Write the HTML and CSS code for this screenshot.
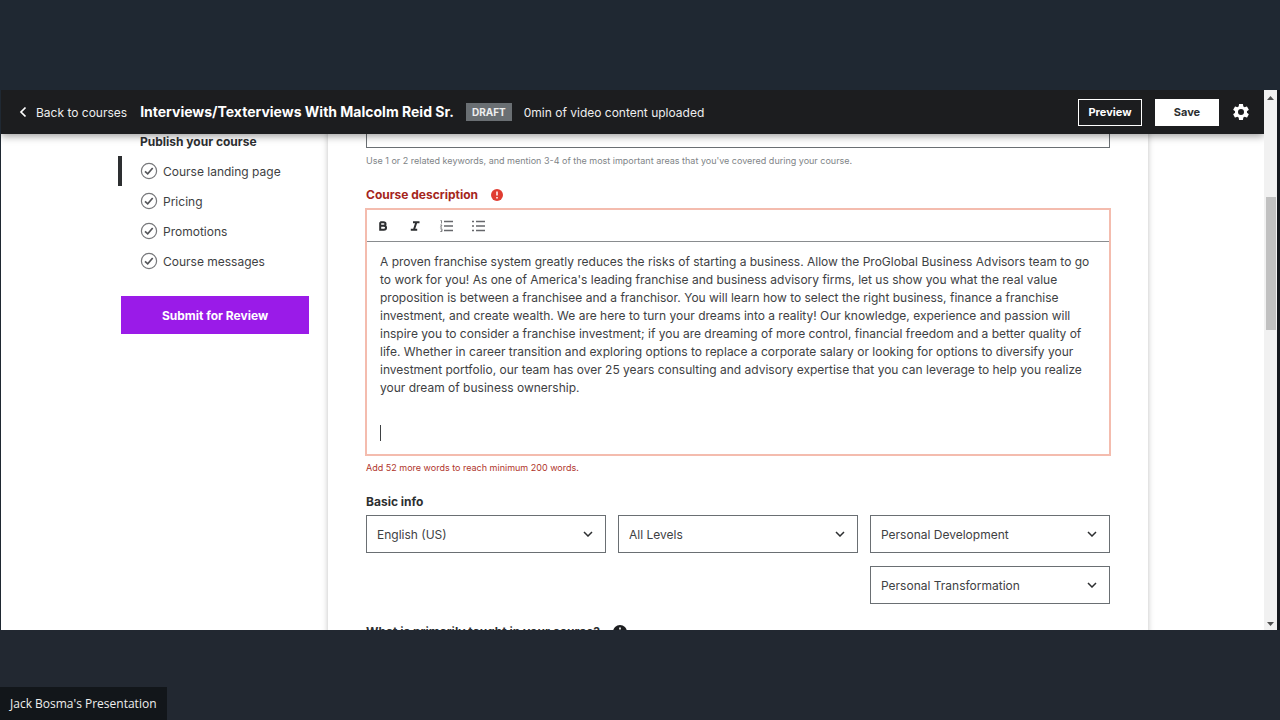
FILE: index.html
```html
<!DOCTYPE html>
<html lang="en">
<head>
<meta charset="utf-8">
<title>Course landing page</title>
<link rel="stylesheet" href="styles.css">
</head>
<body>
<svg class="defs" aria-hidden="true">
  <symbol id="check" viewBox="0 0 18 18"><circle cx="9" cy="9" r="7.6" fill="none" stroke="#77787b" stroke-width="1.2"/><path d="M5 9.3l2.7 2.5 5-5.8" fill="none" stroke="#55565a" stroke-width="1.7"/></symbol>
</svg>
<div class="stage">
  <div class="screen">
    <div class="app">
      <header class="topbar">
        <a class="back" href="#"><svg width="8" height="12" viewBox="0 0 8 12"><path d="M6.5 1.5L2 6l4.500 4.500" fill="none" stroke="#fff" stroke-width="1.700"/></svg>Back to courses</a>
        <h1 class="title">Interviews/Texterviews With Malcolm Reid Sr.</h1>
        <span class="draft">DRAFT</span>
        <span class="uploaded">0min of video content uploaded</span>
        <button class="btn preview" type="button">Preview</button>
        <button class="btn save" type="button">Save</button>
        <button class="gear" type="button" aria-label="Settings"><svg width="20" height="20" viewBox="0 0 24 24"><path fill="#fff" d="M19.140 12.940c.04-.3.060-.61.060-.94 0-.32-.02-.64-.07-.94l2.030-1.580c.18-.14.23-.41.120-.61l-1.920-3.320c-.12-.22-.37-.29-.59-.22l-2.390.96c-.5-.38-1.030-.7-1.620-.94l-.36-2.540c-.04-.24-.24-.41-.48-.41h-3.840c-.24 0-.43.170-.47.410l-.36 2.540c-.59.240-1.130.570-1.620.940l-2.390-.96c-.22-.08-.47 0-.59.220L2.740 8.870c-.12.210-.08.470.120.610l2.030 1.580c-.05.300-.09.630-.09.940s.02.640.070.940l-2.030 1.580c-.18.140-.23.410-.12.610l1.920 3.320c.12.220.370.290.590.220l2.390-.96c.5.380 1.030.7 1.620.940l.36 2.540c.05.240.240.410.480.410h3.840c.24 0 .440-.17.470-.41l.36-2.540c.59-.24 1.130-.56 1.620-.94l2.390.96c.22.080.470 0 .590-.22l1.920-3.320c.12-.22.070-.47-.12-.61l-2.010-1.580zM12 15.600a3.600 3.600 0 1 1 0-7.200 3.600 3.600 0 0 1 0 7.200z"/></svg></button>
      </header>
      <div class="body">
        <nav class="side">
          <h2 class="side-title">Publish your course</h2>
          <a class="item current" href="#"><svg width="18" height="18"><use href="#check"/></svg>Course landing page</a>
          <a class="item" href="#"><svg width="18" height="18"><use href="#check"/></svg>Pricing</a>
          <a class="item" href="#"><svg width="18" height="18"><use href="#check"/></svg>Promotions</a>
          <a class="item" href="#"><svg width="18" height="18"><use href="#check"/></svg>Course messages</a>
          <button class="submit" type="button">Submit for Review</button>
        </nav>
        <main class="card">
          <input class="field" type="text" aria-label="Course subtitle">
          <p class="hint">Use 1 or 2 related keywords, and mention 3-4 of the most important areas that you've covered during your course.</p>
          <div class="label error" id="desc-label">Course description<svg width="12" height="12" viewBox="0 0 12 12"><circle cx="6" cy="6" r="6" fill="#e03c31"/><path d="M6 2.500v4M6 8v1.500" stroke="#fff" stroke-width="1.500"/></svg></div>
          <div class="editor">
            <div class="tools">
              <button class="tool" type="button" aria-label="Bold"><svg width="16" height="16" viewBox="0 0 16 16"><path d="M5.200 4.200h3.300c2.700 0 2.700 3.500 0 3.500H5.200M5.200 7.700h3.600c3 0 3 4.100 0 4.100H5.200V4.200" fill="none" stroke="#2d2f31" stroke-width="2"/></svg></button>
              <button class="tool" type="button" aria-label="Italic"><svg width="16" height="16" viewBox="0 0 16 16"><path d="M6 4.200h6.500M3.800 11.800h6.400M9.400 4.200L6.900 11.800" fill="none" stroke="#2d2f31" stroke-width="2"/></svg></button>
              <button class="tool" type="button" aria-label="Numbered list"><svg width="16" height="16" viewBox="0 0 16 16"><path d="M5 3.500h9M5 8h9M5 12.500h9" stroke="#66676b" stroke-width="1.500"/><path d="M1.500 2.500h1v3M1.300 7h1.700L1.500 9.200H3M1.300 10.800H3v2.700H1.300M2 12.200h1" fill="none" stroke="#77787b" stroke-width=".9"/></svg></button>
              <button class="tool" type="button" aria-label="Bulleted list"><svg width="16" height="16" viewBox="0 0 16 16"><path d="M5 3.500h9M5 8h9M5 12.500h9M1 3.500h2M1 8h2M1 12.500h2" stroke="#66676b" stroke-width="1.500"/></svg></button>
            </div>
            <div class="text" role="textbox" aria-multiline="true" aria-labelledby="desc-label">
              <p>A proven franchise system greatly reduces the risks of starting a business. Allow the ProGlobal Business Advisors team to go<br>to work for you! As one of America's leading franchise and business advisory firms, let us show you what the real value<br>proposition is between a franchisee and a franchisor. You will learn how to select the right business, finance a franchise<br>investment, and create wealth. We are here to turn your dreams into a reality! Our knowledge, experience and passion will<br>inspire you to consider a franchise investment; if you are dreaming of more control, financial freedom and a better quality of<br>life. Whether in career transition and exploring options to replace a corporate salary or looking for options to diversify your<br>investment portfolio, our team has over 25 years consulting and advisory expertise that you can leverage to help you realize<br>your dream of business ownership.</p>
              <div class="caret"></div>
            </div>
          </div>
          <p class="hint warn">Add 52 more words to reach minimum 200 words.</p>
          <h2 class="label">Basic info</h2>
          <div class="selects">
            <select class="select" aria-label="Language"><option>English (US)</option></select>
            <select class="select" aria-label="Level"><option>All Levels</option></select>
            <div class="stack">
              <select class="select" aria-label="Category"><option>Personal Development</option></select>
              <select class="select" aria-label="Subcategory"><option>Personal Transformation</option></select>
            </div>
          </div>
          <h2 class="label taught">What is primarily taught in your course?<svg width="14" height="14" viewBox="0 0 14 14"><circle cx="7" cy="7" r="7" fill="#1c1d1f"/><path d="M7 2.500v2M7 6v5" stroke="#fff" stroke-width="1.600"/></svg></h2>
        </main>
      </div>
    </div>
    <div class="scrollbar" aria-hidden="true">
      <svg width="7" height="4"><path d="M0 4L3.500 0 7 4z" fill="#505050"/></svg>
      <div class="thumb"></div>
      <svg width="7" height="4"><path d="M0 0h7L3.500 4z" fill="#505050"/></svg>
    </div>
  </div>
  <div class="foot"><span class="caption">Jack Bosma's Presentation</span></div>
</div>
</body>
</html>
```
FILE: styles.css
```css
* { box-sizing: border-box; }
body { margin: 0; background: #1f2832; font-family: Inter, "Liberation Sans", sans-serif; font-size: 12px; color: #3e4143; }
h1, h2, p { margin: 0; }
a { color: inherit; text-decoration: none; }
button, select, input { font: inherit; color: inherit; border-radius: 0; margin: 0; }
.defs { position: absolute; width: 0; height: 0; }
.stage { height: 100vh; display: grid; grid-template-rows: 1fr 6fr 1fr; grid-template-columns: minmax(0, 1fr); overflow: hidden; }
.screen { grid-row: 2; min-height: 0; display: flex; background: #fff; border-left: 1px solid #1f2832; border-right: 3px solid #14181d; }
.app { flex: 1; min-width: 0; display: flex; flex-direction: column; overflow: hidden; }
.topbar { position: relative; z-index: 1; flex: none; height: 44px; padding: 0 13px 0 18px; display: flex; align-items: center; background: #1c1d1f; color: #fff; box-shadow: 0 2px 8px rgba(0, 0, 0, .4); white-space: nowrap; }
.back { display: flex; align-items: center; gap: 9px; color: #eee; }
.title { margin-left: 13px; font-size: 14px; line-height: 16px; font-weight: 700; }
.draft { margin: 0 12px; padding: 0 6px; line-height: 18px; background: #6a6f73; font-size: 10px; font-weight: 700; color: #eee; }
.uploaded { color: #eee; }
.btn { width: 64px; height: 27px; padding: 0; border: 1px solid #fff; font-size: 11px; font-weight: 700; }
.preview { margin-left: auto; background: transparent; color: #fff; }
.save { margin: 0 12px 0 13px; background: #fff; color: #2d2f31; }
.gear { width: 20px; height: 20px; padding: 0; border: 0; background: none; }
.gear svg, .tool svg { display: block; }
.body { flex: 1; min-height: 0; display: flex; overflow: hidden; }
.side { flex: none; width: 327px; padding-right: 19px; }
.side-title { padding-left: 139px; font-size: 12px; line-height: 16px; font-weight: 700; color: #2d2f31; }
.item { display: flex; align-items: center; gap: 5px; height: 30px; margin-left: 117px; padding-left: 18px; border-left: 4px solid transparent; }
.current { margin: 6px 0 0 117px; border-left-color: #2d2f31; }
.submit { display: block; width: 188px; height: 38px; margin: 20px 0 0 auto; border: 0; background: #9a1be8; color: #fff; font-size: 12px; font-weight: 700; }
.card { flex: 1; min-width: 0; align-self: flex-start; margin: -24px 116px 0 0; padding: 0 38px; box-shadow: 0 0 6px rgba(0, 0, 0, .25); }
.field { display: block; width: 100%; height: 38px; border: 1px solid #6a6f73; background: #fff; }
.hint { margin-top: 5px; font-size: 9px; line-height: 16px; color: #808487; }
.label { display: flex; align-items: center; gap: 13px; margin: 18px 0 5px; font-size: 12px; line-height: 16px; font-weight: 700; color: #2d2f31; }
.taught { margin-top: 20px; }
.error { color: #a5261c; }
.editor { border: 2px solid #f4bcae; margin: 0 -1px; }
.tools { display: flex; gap: 16px; height: 32px; padding: 0 8px; align-items: center; border-bottom: 1px solid #898c8f; }
.tool { width: 16px; height: 16px; padding: 0; border: 0; background: none; }
.text { height: 212px; padding: 11px 13px; line-height: 18px; white-space: nowrap; }
.caret { width: 1px; height: 16px; margin-top: 28px; background: #3e4143; }
.warn { margin-top: 4px; color: #b0352b; }
.selects { display: grid; grid-template-columns: repeat(3, 1fr); gap: 12px; align-items: start; }
.stack { display: grid; gap: 13px; }
.select { width: 100%; height: 38px; padding: 0 10px; border: 1px solid #6a6f73; appearance: none; background: #fff url("data:image/svg+xml,%3Csvg xmlns='http://www.w3.org/2000/svg' width='10' height='6'%3E%3Cpath d='M1 1l4 4 4-4' fill='none' stroke='%232d2f31' stroke-width='1.500'/%3E%3C/svg%3E") no-repeat right 12px center; }
.scrollbar { flex: none; width: 13px; padding: 6px 0 4px; background: #f1f1f1; display: flex; flex-direction: column; align-items: center; }
.thumb { width: 10px; height: 25%; margin: 97px 0 auto; background: #c1c1c1; }
.foot { grid-row: 3; display: flex; align-items: flex-end; background: #222831; }
.caption { padding: 0 10px; line-height: 33px; background: #12161a; color: #eee; font-family: "Open Sans", "Noto Sans", sans-serif; font-size: 12px; }
```
